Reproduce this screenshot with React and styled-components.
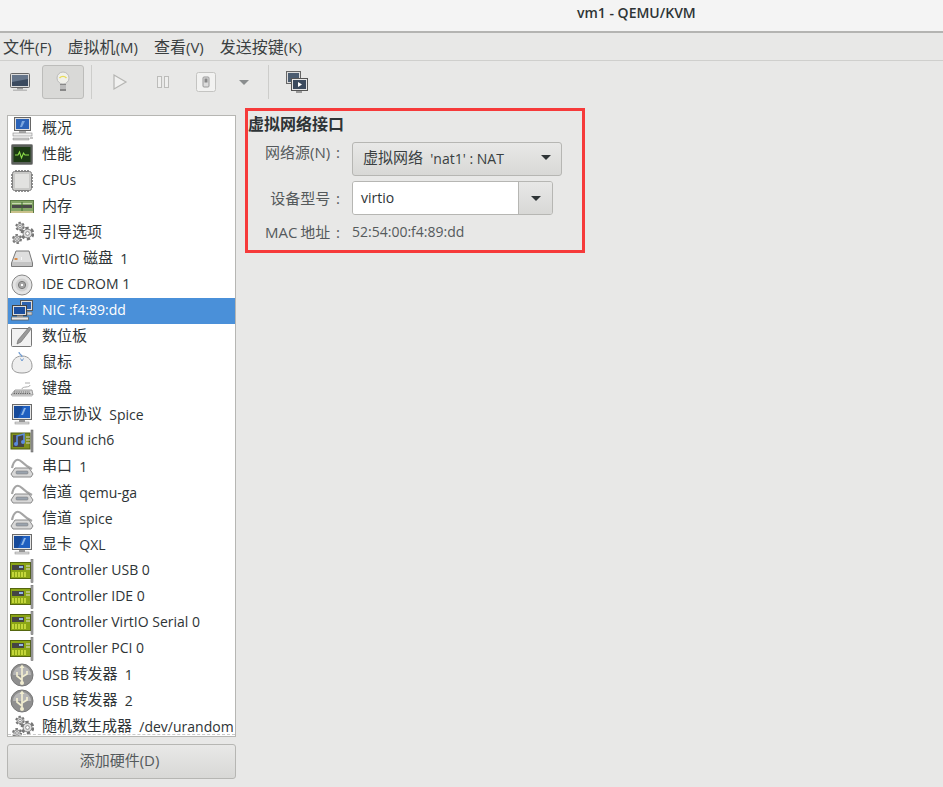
import React from "react";
import styled, { createGlobalStyle } from "styled-components";

const GlobalStyle = createGlobalStyle`
  html, body {
    margin: 0;
    padding: 0;
    background: #e8e8e7;
  }
  body {
    font-family: "Open Sans", "Noto Sans CJK SC", sans-serif;
    font-size: 14px;
    color: #2e3436;
  }
`;

const Window = styled.div`
  width: 943px;
  height: 787px;
  overflow: hidden;
  display: flex;
  flex-direction: column;
`;

const TitleBar = styled.div`
  height: 26px;
  background: #f4f4f4;
  border-bottom: 2px solid #b4b4b2;
  padding: 5px 0 0 577px;
  font-size: 14px;
  font-weight: 600;
  color: #2e3436;
  line-height: 16px;
`;

const MenuBar = styled.div`
  height: 27px;
  display: flex;
  align-items: center;
  gap: 16px;
  padding-left: 3px;
  border-bottom: 1px solid #cfcfcd;
  font-size: 15px;
  color: #3a3f41;
`;

const MenuItem = styled.span`
  line-height: 24px;
`;

const Toolbar = styled.div`
  height: 34px;
  padding-top: 4px;
  display: flex;
  align-items: center;
`;

const ToolButton = styled.div`
  width: ${(p) => p.$w || 42}px;
  height: 34px;
  display: flex;
  align-items: center;
  justify-content: center;
  box-sizing: border-box;
  border-radius: 3px;
  ${(p) => p.$active && "background: #d9d9d7; border: 1px solid #bcbcba;"}
`;

const ToolSep = styled.div`
  width: 1px;
  height: 34px;
  background: #cdcdcb;
  margin: 0 7px;
`;

const Body = styled.div`
  flex: 1;
  display: flex;
  padding: 16px 0 0 7px;
  gap: 9px;
`;

const Side = styled.div`
  width: 229px;
  display: flex;
  flex-direction: column;
  gap: 7px;
`;

const HardwareList = styled.div`
  position: relative;
  height: 622px;
  box-sizing: border-box;
  background: #fff;
  border: 1px solid #b6b6b3;
  overflow: hidden;

  &::after {
    content: "";
    position: absolute;
    left: 0;
    right: 0;
    bottom: 1px;
    border-bottom: 1px dashed #c9c9c9;
  }
`;

const Row = styled.div`
  height: 26px;
  display: flex;
  align-items: center;
  gap: 8px;
  padding-left: 2px;
  background: ${(p) => (p.$selected ? "#4a90d9" : "transparent")};
  color: ${(p) => (p.$selected ? "#fff" : "#2e3436")};
  white-space: pre;
`;

const RowLabel = styled.span`
  line-height: 24px;
  margin-top: -2px;
`;

const RowIcon = styled.svg`
  width: 24px;
  height: 24px;
  flex: none;
`;

const AddButton = styled.button`
  height: 35px;
  border: 1px solid #b6b6b3;
  border-radius: 3px;
  background: linear-gradient(#e8e8e7, #d8d8d6);
  font: inherit;
  font-size: 15px;
  color: #555a5c;
  padding: 0 4px 4px 0;
`;

const Panel = styled.div`
  width: 340px;
  height: 145px;
  margin-top: -7px;
  box-sizing: border-box;
  border: 3px solid #f63a3a;
  display: flex;
  flex-direction: column;
  gap: 6px;
`;

const PanelTitle = styled.div`
  height: 24px;
  flex: none;
  padding-top: 3px;
  box-sizing: border-box;
  font-weight: 700;
  line-height: 20px;
  color: #2e3436;
`;

const Field = styled.div`
  display: grid;
  grid-template-columns: 92px 1fr;
  column-gap: 12px;
  align-items: center;
  height: ${(p) => p.$h}px;
  color: #555a5c;
  white-space: pre;
`;

const FieldLabel = styled.div`
  text-align: right;
  font-size: 15px;
  word-spacing: -1px;
  padding-bottom: ${(p) => p.$lift || 0}px;
`;

const SelectButton = styled.div`
  width: 210px;
  height: 34px;
  box-sizing: border-box;
  border: 1px solid #b6b6b3;
  border-radius: 3px;
  background: linear-gradient(#e8e8e7, #d8d8d6);
  display: flex;
  align-items: center;
  justify-content: space-between;
  padding: 0 10px 3px;
  white-space: pre;
  color: #3a3f41;
`;

const Combo = styled.div`
  width: 201px;
  height: 34px;
  box-sizing: border-box;
  border: 1px solid #b6b6b3;
  border-radius: 3px;
  display: flex;
  overflow: hidden;
`;

const ComboText = styled.div`
  flex: 1;
  background: #fff;
  color: #2e3436;
  display: flex;
  align-items: center;
  padding: 0 0 1px 8px;
`;

const ComboArrow = styled.div`
  width: 33px;
  border-left: 1px solid #b6b6b3;
  background: linear-gradient(#e8e8e7, #d8d8d6);
  display: flex;
  align-items: center;
  justify-content: center;
`;

const Arrow = styled.span`
  width: 0;
  height: 0;
  border-left: 5px solid transparent;
  border-right: 5px solid transparent;
  border-top: 5px solid ${(p) => p.$color || "#2e3436"};
`;

// chinese glyphs are a size above the latin ones in the screenshot
const Cjk = styled.span`
  font-size: ${(p) => p.$size || 15}px;
  vertical-align: ${(p) => (p.$size ? 0 : 1)}px;
`;

const Mixed = ({ text, size }) =>
  text.split(/([\u4e00-\u9fff]+)/).map((part, i) =>
    i % 2 ? (
      <Cjk key={i} $size={size}>
        {part}
      </Cjk>
    ) : (
      part
    )
  );

/* icons */
const screen = (
  <>
    <rect x="2.5" y="1.5" width="19" height="15" fill="#e6e6e6" stroke="#6b6b6b" />
    <rect x="4" y="3" width="16" height="12" fill="#1f5fc0" />
    <path d="M4 15V3h9l-5 12z" fill="#174a9a" />
    <path d="M11 12l3-7h2l-3 7z" fill="#8fb6e6" />
    <rect x="9" y="17" width="6" height="2" fill="#999" />
    <rect x="5" y="19" width="14" height="2" fill="#ddd" stroke="#888" strokeWidth=".5" />
  </>
);

const monitorDesk = (
  <>
    <rect x="4.5" y="0.5" width="16" height="13" fill="#ddd" stroke="#666" />
    <rect x="6" y="2" width="13" height="10" fill="#2a62b8" />
    <path d="M10 10l2-6h3l-3 6z" fill="#7ba7e0" />
    <rect x="9" y="14" width="7" height="2" fill="#aaa" />
    <rect x="3" y="16" width="19" height="3" fill="#eee" stroke="#888" strokeWidth=".6" />
    <path d="M3 21h16v2H3z" fill="#ccc" stroke="#888" strokeWidth=".5" />
    <path d="M20 21h3" stroke="#aaa" strokeWidth="1.4" />
  </>
);

const perf = (
  <>
    <rect x="1.5" y="1.5" width="21" height="20" rx="1" fill="#5a5f5a" stroke="#888" />
    <rect x="3.5" y="4" width="17" height="15" fill="#1c3a14" />
    <path d="M5 12h3l1.5-3 2 6 2-5 1.5 2h4" fill="none" stroke="#8fe04a" strokeWidth="1.1" />
  </>
);

const chip = (
  <>
    <path
      d="M1 6h3M1 9h3M1 12h3M1 15h3M1 18h3M20 6h3M20 9h3M20 12h3M20 15h3M20 18h3M6 1v3M9 1v3M12 1v3M15 1v3M18 1v3M6 20v3M9 20v3M12 20v3M15 20v3M18 20v3"
      stroke="#6e6e6e"
      strokeWidth="1.5"
    />
    <rect x="2.5" y="2.5" width="19" height="19" rx="2" fill="#c9c9c7" stroke="#808080" />
    <rect x="5" y="5" width="14" height="14" fill="#e2e2e0" />
  </>
);

const ram = (
  <>
    <rect x="0.5" y="5.5" width="23" height="12" fill="#84a566" stroke="#5c7a45" />
    <rect x="2" y="10" width="20" height="3" fill="#4a4a4a" />
    <rect x="2" y="8" width="20" height="1" fill="#c6d8b0" />
    <path d="M12 7v9" stroke="#3c6a2c" />
    <rect x="1" y="16" width="22" height="2" fill="#c9c18a" />
  </>
);

const gear = (cx, cy, r) => (
  <>
    <circle
      cx={cx}
      cy={cy}
      r={r}
      fill="none"
      stroke="#777"
      strokeWidth={r * 0.5}
      strokeDasharray={`${r * 0.6} ${r * 0.45}`}
    />
    <circle cx={cx} cy={cy} r={r * 0.8} fill="#dedede" stroke="#6e6e6e" strokeWidth=".8" />
    <circle cx={cx} cy={cy} r={r * 0.34} fill="#fff" stroke="#6e6e6e" strokeWidth=".7" />
  </>
);

const gears = (
  <>
    {gear(10, 5.5, 3.8)}
    {gear(17.5, 12.5, 5.5)}
    {gear(7, 18, 4)}
  </>
);

const disk = (
  <>
    <path d="M6 4h13l3.5 12v3.5h-21V16z" fill="#dedede" stroke="#7a7a7a" />
    <path d="M2 16h20" stroke="#aaa" />
    <path d="M2 17h20v2H2z" fill="#c4c4c4" />
    <rect x="4.5" y="11" width="3" height="2" fill="#d88b4a" />
    <rect x="11" y="10" width="1" height="3" fill="#f5f5f5" />
  </>
);

const cdrom = (
  <>
    <circle cx="12" cy="12" r="10" fill="#e4e4e4" stroke="#888" />
    <circle cx="12" cy="12" r="6.5" fill="#d0d0d0" />
    <circle cx="12" cy="12" r="3.6" fill="#aaa" stroke="#777" />
    <circle cx="12" cy="12" r="1.8" fill="#fff" stroke="#777" strokeWidth=".6" />
  </>
);

const nic = (
  <>
    <rect x="10.5" y="1.5" width="12" height="10" fill="#ddd" stroke="#555" />
    <rect x="12" y="3" width="9" height="7" fill="#2e62b0" />
    <rect x="2.5" y="6.5" width="14" height="10" fill="#ddd" stroke="#444" />
    <rect x="4" y="8" width="11" height="7" fill="#1d4f9e" />
    <rect x="1.5" y="18" width="17" height="3" fill="#e6e6e6" stroke="#555" strokeWidth=".7" />
    <path d="M17 13h5v3h-5z" fill="#ccc" stroke="#666" strokeWidth=".6" />
    <rect x="7" y="16.5" width="6" height="1.5" fill="#999" />
  </>
);

const tablet = (
  <>
    <rect x="1.5" y="3.5" width="20" height="18" rx="1" fill="#f1f1f1" stroke="#777" />
    <path d="M8 15L19 2l2.5 1.5L11 17l-4 2z" fill="#999" stroke="#666" strokeWidth=".6" />
  </>
);

const mouse = (
  <>
    <path d="M12 5C5 5 2 10 2 15s4 7 10 7 10-2 10-7-3-10-10-10z" fill="#eee" stroke="#999" />
    <path d="M9 1c0 3 3 2 3 5" fill="none" stroke="#6f9bd1" strokeWidth="1.2" />
    <path d="M10.5 7.5L12 10l1.5-2.5" fill="none" stroke="#6f9bd1" />
  </>
);

const keyboard = (
  <>
    <path d="M5 13h17l1 5H1z" fill="#d8d8d8" stroke="#888" strokeWidth=".8" />
    <path d="M4 15h16M3.5 16.5h17" stroke="#666" strokeDasharray="1.5 .7" />
    <path d="M12 12c0-3 8-1 8-4M15 6h5" fill="none" stroke="#aaa" />
    <path d="M2 19h20" stroke="#bbb" />
  </>
);

const sound = (
  <>
    <rect x="1" y="4" width="19" height="16" fill="#7f8f1c" stroke="#4f5c10" />
    <rect x="3" y="6" width="11" height="12" fill="#444" />
    <path d="M7 15V7l7-2v8" fill="none" stroke="#5b8be0" strokeWidth="1.6" />
    <circle cx="6" cy="15" r="2" fill="#5b8be0" />
    <circle cx="13" cy="13" r="2" fill="#5b8be0" />
    <rect x="21" y="1" width="2" height="22" fill="#999" stroke="#555" strokeWidth=".5" />
    <path d="M16 8h4M16 11h4M16 14h4" stroke="#ccc" />
  </>
);

const serial = (
  <>
    <path d="M2 13C4 4 8 3 12 7s6 5 10 7" fill="none" stroke="#a5a5a5" strokeWidth="2.2" />
    <path d="M5 13h14l4 6-2 3H3l-2-3z" fill="#d8d8d8" stroke="#8a8a8a" />
    <rect x="6" y="16" width="12" height="3" rx="1" fill="#9aa3ad" stroke="#777" strokeWidth=".5" />
  </>
);

const card = (
  <>
    <rect x="0.5" y="3.5" width="20" height="16" fill="#8ba516" stroke="#55660f" />
    <rect x="2" y="6" width="12" height="5" fill="#444" />
    <rect x="9" y="7" width="4" height="2" fill="#8fb6e6" />
    <path d="M3 13v5M6 13v5M9 13v5M12 13v5M15 13v5" stroke="#dcec4a" strokeWidth="1.4" />
    <path d="M16 7h4M16 10h4" stroke="#ddd" />
    <rect x="21" y="0.5" width="2" height="23" fill="#aaa" stroke="#555" strokeWidth=".5" />
  </>
);

const usb = (
  <>
    <circle cx="12" cy="12" r="11" fill="#8f8f8f" stroke="#777" />
    <path d="M3 12a9 9 0 0 1 18 0z" fill="#b5b5b5" />
    <path d="M12 21V3M12 17l-5-4V9M12 14l5-3V8" fill="none" stroke="#f1edd0" strokeWidth="1.7" />
    <path d="M9.5 5L12 1.5 14.5 5z" fill="#f1edd0" />
    <circle cx="12" cy="20" r="2" fill="#f1edd0" />
  </>
);

const hardware = [
  [monitorDesk, "概况"],
  [perf, "性能"],
  [chip, "CPUs"],
  [ram, "内存"],
  [gears, "引导选项"],
  [disk, "VirtIO 磁盘  1"],
  [cdrom, "IDE CDROM 1"],
  [nic, "NIC :f4:89:dd"],
  [tablet, "数位板"],
  [mouse, "鼠标"],
  [keyboard, "键盘"],
  [screen, "显示协议  Spice"],
  [sound, "Sound ich6"],
  [serial, "串口  1"],
  [serial, "信道  qemu-ga"],
  [serial, "信道  spice"],
  [screen, "显卡  QXL"],
  [card, "Controller USB 0"],
  [card, "Controller IDE 0"],
  [card, "Controller VirtIO Serial 0"],
  [card, "Controller PCI 0"],
  [usb, "USB 转发器  1"],
  [usb, "USB 转发器  2"],
  [gears, "随机数生成器  /dev/urandom"],
];

const menus = ["文件(F)", "虚拟机(M)", "查看(V)", "发送按键(K)"];

const App = () => (
  <Window>
    <GlobalStyle />
    <TitleBar>vm1 - QEMU/KVM</TitleBar>
    <MenuBar>
      {menus.map((m) => (
        <MenuItem key={m}>
          <Mixed text={m} size={16} />
        </MenuItem>
      ))}
    </MenuBar>
    <Toolbar>
      <ToolButton>
        <svg width="24" height="24" viewBox="0 0 24 24">
          <rect x="1.5" y="3.5" width="19" height="14" rx="1" fill="#dcdcdc" stroke="#666" />
          <rect x="3" y="5" width="16" height="11" fill="#3b4a5e" />
          <path d="M3 5h16v4L3 12z" fill="#65758a" />
          <rect x="8" y="18" width="6" height="1.5" fill="#999" />
          <rect x="4" y="19.5" width="14" height="1.5" fill="#bbb" />
        </svg>
      </ToolButton>
      <ToolButton $active>
        <svg width="24" height="26" viewBox="0 0 24 26">
          <circle cx="12" cy="9" r="6" fill="#f0f0ea" stroke="#bbb" />
          <path d="M8.5 9c2-2 5-2 7 0" fill="none" stroke="#e8dc5a" strokeWidth="1.5" />
          <rect x="9" y="15" width="6" height="7" fill="#888" />
          <path d="M9 17h6M9 19h6" stroke="#eee" />
        </svg>
      </ToolButton>
      <ToolSep />
      <ToolButton>
        <svg width="24" height="24" viewBox="0 0 24 24">
          <path d="M6 5l12 7-12 7z" fill="#f1f1f0" stroke="#b5b5b3" strokeWidth="1.2" />
        </svg>
      </ToolButton>
      <ToolButton $w={43}>
        <svg width="24" height="24" viewBox="0 0 24 24">
          <rect x="6.5" y="6.5" width="4" height="11" fill="#efefee" stroke="#bcbcba" />
          <rect x="13.5" y="6.5" width="4" height="11" fill="#efefee" stroke="#bcbcba" />
        </svg>
      </ToolButton>
      <ToolButton $w={43}>
        <svg width="24" height="24" viewBox="0 0 24 24">
          <rect x="2.5" y="2.5" width="19" height="19" rx="2" fill="#f2f2f1" stroke="#c4c4c2" />
          <rect x="9" y="7" width="6" height="10" rx="1" fill="#ddd" stroke="#999" />
          <rect x="10.5" y="8.5" width="3" height="4" fill="#888" />
        </svg>
      </ToolButton>
      <ToolButton $w={34}>
        <Arrow $color="#8a8d8e" />
      </ToolButton>
      <ToolSep />
      <ToolButton>
        <svg width="24" height="24" viewBox="0 0 24 24">
          <rect x="1.5" y="1.5" width="14" height="12" fill="#dcdcdc" stroke="#666" />
          <rect x="3" y="3" width="11" height="9" fill="#4b5c70" />
          <rect x="6.5" y="8.5" width="16" height="12" fill="#e8e8e8" stroke="#555" />
          <rect x="8" y="10" width="13" height="9" fill="#3b4a5e" />
          <path d="M13 12l4 2.5-4 2.5z" fill="#fff" />
          <rect x="11" y="21" width="6" height="2" fill="#999" />
        </svg>
      </ToolButton>
    </Toolbar>
    <Body>
      <Side>
        <HardwareList>
          {hardware.map(([icon, label]) => (
            <Row key={label} $selected={label.startsWith("NIC")}>
              <RowIcon viewBox="0 0 24 24">{icon}</RowIcon>
              <RowLabel>
                <Mixed text={label} />
              </RowLabel>
            </Row>
          ))}
        </HardwareList>
        <AddButton>添加硬件(D)</AddButton>
      </Side>
      <Panel>
        <PanelTitle>
          <Mixed text="虚拟网络接口" size={16} />
        </PanelTitle>
        <Field $h={34}>
          <FieldLabel $lift={14}>网络源(N)  :</FieldLabel>
          <SelectButton>
            <span>
              <Mixed text="虚拟网络  'nat1' : NAT" />
            </span>
            <Arrow />
          </SelectButton>
        </Field>
        <Field $h={34}>
          <FieldLabel $lift={2}>设备型号  :</FieldLabel>
          <Combo>
            <ComboText>virtio</ComboText>
            <ComboArrow>
              <Arrow />
            </ComboArrow>
          </Combo>
        </Field>
        <Field $h={18}>
          <FieldLabel>MAC 地址  :</FieldLabel>
          <span>52:54:00:f4:89:dd</span>
        </Field>
      </Panel>
    </Body>
  </Window>
);

export default App;
